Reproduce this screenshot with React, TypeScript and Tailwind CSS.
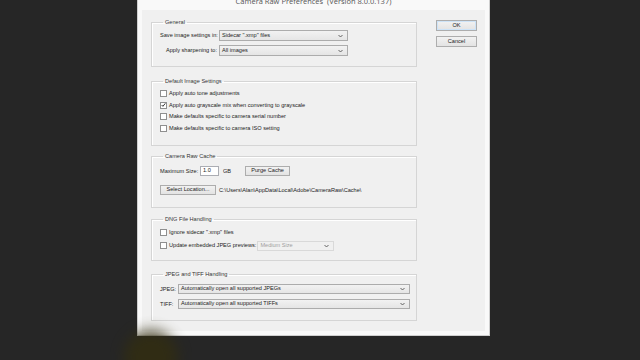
import React from 'react';

const Chevron = () => (
    <svg width="5" height="4" viewBox="0 0 5 4" className="shrink-0">
        <path d="M0.5 1 L2.5 3 L4.5 1" fill="none" stroke="#555" strokeWidth="0.9" />
    </svg>
);

const Select = ({ text, className = '', disabled = false }: { text: string; className?: string; disabled?: boolean }) => (
    <div
        className={`flex items-center justify-between border px-[2px] pr-[4px] whitespace-nowrap ${
            disabled ? 'border-[#d9d9d9] bg-[#f0f0f0] text-[#a0a0a0]' : 'border-[#acacac] bg-gradient-to-b from-[#f2f2f2] to-[#e5e5e5] text-[#222]'
        } ${className}`}
    >
        <span className="leading-none">{text}</span>
        <Chevron />
    </div>
);

const Button = ({ text, className = '' }: { text: string; className?: string }) => (
    <div className={`flex items-center justify-center border border-[#adadad] bg-gradient-to-b from-[#f2f2f2] to-[#e3e3e3] text-[#222] leading-none whitespace-nowrap ${className}`}>
        {text}
    </div>
);

const Check = ({ label, checked = false }: { label: string; checked?: boolean }) => (
    <div className="flex items-center h-[11.5px] gap-[2px] whitespace-nowrap">
        <div className="w-[7px] h-[7px] border border-[#8f8f8f] bg-white flex items-center justify-center">
            {checked && (
                <svg width="6" height="6" viewBox="0 0 6 6">
                    <path d="M0.8 3 L2.3 4.6 L5.2 1" fill="none" stroke="#222" strokeWidth="1.1" />
                </svg>
            )}
        </div>
        <span className="leading-none">{label}</span>
    </div>
);

const Group = ({ title, className = '', children }: { title: string; className?: string; children: React.ReactNode }) => (
    <fieldset className={`border border-[#d5d5d5] shadow-[inset_1px_1px_0_#fff] pl-[8px] ${className}`}>
        <legend className="ml-[3px] px-[2px] leading-none text-[#333] whitespace-nowrap">{title}</legend>
        {children}
    </fieldset>
);

export default function App() {
    return (
        <div className="relative w-[640px] h-[360px] overflow-hidden bg-[#262626] font-['Liberation_Sans',sans-serif] text-[5.6px] text-[#222]">
            {/* Dialog window */}
            <div className="ml-[137px] -mt-[11px] w-[353px] h-[347px] bg-[#f9f9f9] border border-[#cfcfcf] flex flex-col">
                <div className="h-[20px] pt-[8px] text-center leading-none text-[7.5px] text-[#555] font-['Open_Sans',sans-serif] whitespace-nowrap">
                    Camera Raw Preferences&nbsp;&nbsp;(Version 8.0.0.137)
                </div>
                <div className="flex-1 mx-[4px] mb-[4px] bg-[#f0f0f0] flex pl-[9px] pt-[10px]">
                    {/* Left column */}
                    <div className="w-[266px] flex flex-col">
                        <Group title="General" className="h-[47px] pt-[4px]">
                            <div className="flex items-center h-[12px] whitespace-nowrap">
                                <span className="w-[59px] text-right pr-[2px]">Save image settings in:</span>
                                <Select text='Sidecar ".xmp" files' className="w-[129px] h-[11px]" />
                            </div>
                            <div className="flex items-center h-[12px] mt-[3px] whitespace-nowrap">
                                <span className="w-[59px] text-right pr-[2px]">Apply sharpening to:</span>
                                <Select text="All images" className="w-[129px] h-[11px]" />
                            </div>
                        </Group>

                        <Group title="Default Image Settings" className="h-[67px] mt-[12px] pt-[3.5px]">
                            <Check label="Apply auto tone adjustments" />
                            <Check label="Apply auto grayscale mix when converting to grayscale" checked />
                            <Check label="Make defaults specific to camera serial number" />
                            <Check label="Make defaults specific to camera ISO setting" />
                        </Group>

                        <Group title="Camera Raw Cache" className="h-[54px] mt-[8px] pt-[6px]">
                            <div className="flex items-center h-[11px] whitespace-nowrap">
                                <span className="w-[40px]">Maximum Size:</span>
                                <div className="w-[19px] h-[10px] border border-[#abadb3] bg-white flex items-center px-[2px] leading-none">1.0</div>
                                <span className="ml-[4px]">GB</span>
                                <Button text="Purge Cache" className="ml-[14px] w-[45px] h-[10px]" />
                            </div>
                            <div className="flex items-center h-[11px] mt-[8px] whitespace-nowrap">
                                <Button text="Select Location..." className="w-[56px] h-[10px]" />
                                <span className="ml-[3px]">C:\Users\Alan\AppData\Local\Adobe\CameraRaw\Cache\</span>
                            </div>
                        </Group>

                        <Group title="DNG File Handling" className="h-[44px] mt-[9px] pt-[4px]">
                            <Check label='Ignore sidecar ".xmp" files' />
                            <div className="flex items-center mt-[2px]">
                                <Check label="Update embedded JPEG previews:" />
                                <Select text="Medium Size" disabled className="ml-[1px] w-[77px] h-[10px]" />
                            </div>
                        </Group>

                        <Group title="JPEG and TIFF Handling" className="h-[49px] mt-[11px] pt-[6px]">
                            <div className="flex items-center h-[11px] whitespace-nowrap">
                                <span className="w-[18px]">JPEG:</span>
                                <Select text="Automatically open all supported JPEGs" className="w-[232px] h-[10px]" />
                            </div>
                            <div className="flex items-center h-[11px] mt-[4px] whitespace-nowrap">
                                <span className="w-[18px]">TIFF:</span>
                                <Select text="Automatically open all supported TIFFs" className="w-[232px] h-[10px]" />
                            </div>
                        </Group>
                    </div>

                    {/* Right column buttons */}
                    <div className="ml-[19px] flex flex-col gap-[5px]">
                        <Button text="OK" className="w-[41px] h-[11px] border-[#6fa4d8] shadow-[inset_0_0_0_1px_#cde3f7]" />
                        <Button text="Cancel" className="w-[41px] h-[11px]" />
                    </div>
                </div>
            </div>

            {/* cursor highlight */}
            <div className="absolute left-[124px] top-[330px] w-[54px] h-[54px] rounded-full bg-[#332e10] blur-[7px] opacity-80" />
        </div>
    );
}
